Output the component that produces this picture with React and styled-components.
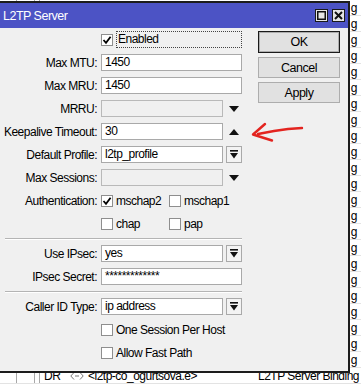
import React from 'react';
import styled, { createGlobalStyle } from 'styled-components';

const GlobalStyle = createGlobalStyle`
  html, body {
    margin: 0;
    padding: 0;
    background: #fff;
    overflow: hidden;
  }
  body {
    font-family: "Liberation Sans", Arial, sans-serif;
    font-size: 12px;
    letter-spacing: -0.5px;
    color: #000;
  }
`

const Desktop = styled.div`
  position: relative;
  width: 361px;
  height: 386px;
  overflow: hidden;
`

const Table = styled.div`
  display: flex;
  flex-direction: column;
`

const Row = styled.div`
  display: grid;
  grid-template-columns: 17px 18px 5px 30px 18px 170px 92px 1fr;
  height: 16px;
  line-height: 16px;
  border-bottom: 1px solid #e3e3e3;
  box-sizing: border-box;
  white-space: nowrap;
`

const Cell = styled.div`
  border-right: ${({ $line }) => ($line ? '1px solid #a8a8a8' : 'none')};
  padding-left: ${({ $pad }) => $pad || 0}px;
  overflow: hidden;
`

/* only the tail of the type column shows past the window edge */
const TypeTail = styled.div`
  display: flex;
  justify-content: flex-end;
  overflow: hidden;
  padding-right: 4px;
`

const Window = styled.div`
  position: absolute;
  left: -4px;
  top: 1px;
  width: 354px;
  height: 372px;
  box-sizing: border-box;
  border: 2px solid #1c1c1c;
  background: #f0f0f0;
  display: flex;
  flex-direction: column;
`

const TitleBar = styled.div`
  height: 25px;
  background: #4c53c5;
  display: flex;
  align-items: center;
  justify-content: space-between;
  padding: 0 3px 0 5px;
`

const Title = styled.span`
  color: #fff;
  font-size: 12.5px;
`

const TitleButtons = styled.div`
  display: flex;
  gap: 4px;
`

const TitleButton = styled.div`
  width: 11px;
  height: 11px;
  border: 1px solid #1a1a1a;
  background: #e6e6e6;
  display: flex;
  align-items: center;
  justify-content: center;
`

const Body = styled.div`
  display: flex;
  gap: 16px;
  padding-top: 3px;
`

const Form = styled.div`
  display: flex;
  flex-direction: column;
  gap: 6px;
  width: 244px;
`

const Field = styled.div`
  display: grid;
  grid-template-columns: 99px 141px;
  column-gap: 4px;
  height: 17px;
  align-items: center;
`

const Label = styled.div`
  text-align: right;
  white-space: nowrap;
`

const Control = styled.div`
  display: flex;
  align-items: center;
  gap: 3px;
  height: 17px;
`

const Input = styled.div`
  box-sizing: border-box;
  height: 17px;
  width: ${({ $short }) => ($short ? '122px' : '141px')};
  border: 1px solid ${({ $disabled }) => ($disabled ? '#b9b9b9' : '#a9a9a9')};
  background: ${({ $disabled }) => ($disabled ? '#f0f0f0' : '#fff')};
  padding-left: 3px;
  line-height: 15px;
  white-space: nowrap;
  overflow: hidden;
`

const Arrow = styled.div`
  width: 15px;
  height: 16px;
  display: flex;
  align-items: center;
  justify-content: center;
`

const DropButton = styled.div`
  box-sizing: border-box;
  width: 16px;
  height: 17px;
  border: 1px solid #a9a9a9;
  background: #f3f3f3;
  display: flex;
  align-items: center;
  justify-content: center;
`

const Checks = styled.div`
  display: grid;
  grid-template-columns: 68px 68px;
  align-items: center;
`

const Check = styled.label`
  display: flex;
  align-items: center;
  gap: 3px;
  white-space: nowrap;
`

const Box = styled.span`
  box-sizing: border-box;
  width: 12px;
  height: 12px;
  border: 1px solid #8e8e8e;
  background: #fff;
  display: flex;
  align-items: center;
  justify-content: center;
`

const Focus = styled.span`
  flex: 1;
  height: 17px;
  line-height: 15px;
  box-sizing: border-box;
  border: 1px dotted #444;
  padding-left: 1px;
`

const Separator = styled.div`
  height: 1px;
  margin-left: 7px;
  background: #b4b4b4;
  border-bottom: 1px solid #fff;
  margin-bottom: -1px;
`

const Buttons = styled.div`
  display: flex;
  flex-direction: column;
  gap: 4px;
  width: 82px;
`

const Button = styled.div`
  box-sizing: border-box;
  height: ${({ $default }) => ($default ? 22 : 21)}px;
  border: 1px solid ${({ $default }) => ($default ? '#1a1a1a' : '#adadad')};
  box-shadow: ${({ $default }) => ($default ? 'inset 0 0 0 1px #adadad' : 'none')};
  background: #e1e1e1;
  display: flex;
  align-items: center;
  justify-content: center;
  font-size: 12.5px;
`

const Annotation = styled.svg`
  position: absolute;
  left: 246px;
  top: 116px;
`

const TickIcon = () => (
  <svg width="10" height="10" viewBox="0 0 10 10">
    <path d="M1.5 5 L4 7.8 L8.6 1.8" fill="none" stroke="#000" strokeWidth="1.8" />
  </svg>
)

const Tri = ({ up }) => (
  <svg width="10" height="6" viewBox="0 0 10 6">
    <path d={up ? 'M0 6 L5 0 L10 6 Z' : 'M0 0 L10 0 L5 6 Z'} fill="#111" />
  </svg>
)

const DropIcon = () => (
  <svg width="8" height="9" viewBox="0 0 8 9">
    <rect x="0" y="0" width="8" height="1.6" fill="#111" />
    <path d="M0 3 L8 3 L4 8.5 Z" fill="#111" />
  </svg>
)

const CheckBox = ({ checked, children }) => (
  <Check>
    <Box>{checked && <TickIcon />}</Box>
    {children}
  </Check>
)

const LinkIcon = () => (
  <svg width="14" height="8" viewBox="0 0 14 8" style={{ marginTop: 4 }}>
    <path d="M4 0.5 L0.8 4 L4 7.5 M10 0.5 L13.2 4 L10 7.5 M5 4 L9 4" fill="none" stroke="#777" strokeWidth="1" />
  </svg>
)

const rows = Array.from({ length: 23 })

export default function App() {
  return (
    <>
      <GlobalStyle />
      <Desktop>
        <Table>
          {rows.map((_, i) => (
            <Row key={i}>
              <Cell $line />
              <Cell $line />
              <Cell $line />
              <Cell />
              <Cell />
              <Cell />
              <Cell />
              <TypeTail>g</TypeTail>
            </Row>
          ))}
          <Row>
            <Cell $line />
            <Cell $line />
            <Cell $line />
            <Cell $pad={4}>DR</Cell>
            <Cell><LinkIcon /></Cell>
            <Cell>&lt;l2tp-co_ogurtsova.e&gt;</Cell>
            <Cell style={{ gridColumn: 'span 2' }}>L2TP Server Binding</Cell>
          </Row>
        </Table>

        <Window>
          <TitleBar>
            <Title>L2TP Server</Title>
            <TitleButtons>
              <TitleButton>
                <svg width="9" height="9" viewBox="0 0 9 9">
                  <rect x="0.75" y="0.75" width="7.5" height="7.5" fill="none" stroke="#111" strokeWidth="1.5" />
                </svg>
              </TitleButton>
              <TitleButton>
                <svg width="9" height="9" viewBox="0 0 9 9">
                  <path d="M1 1 L8 8 M8 1 L1 8" stroke="#111" strokeWidth="2" />
                </svg>
              </TitleButton>
            </TitleButtons>
          </TitleBar>

          <Body>
            <Form>
              <Field>
                <span />
                <Control>
                  <Box><TickIcon /></Box>
                  <Focus>Enabled</Focus>
                </Control>
              </Field>
              <Field>
                <Label>Max MTU:</Label>
                <Control><Input>1450</Input></Control>
              </Field>
              <Field>
                <Label>Max MRU:</Label>
                <Control><Input>1450</Input></Control>
              </Field>
              <Field>
                <Label>MRRU:</Label>
                <Control><Input $short $disabled /><Arrow><Tri /></Arrow></Control>
              </Field>
              <Field>
                <Label>Keepalive Timeout:</Label>
                <Control><Input $short>30</Input><Arrow><Tri up /></Arrow></Control>
              </Field>
              <Field>
                <Label>Default Profile:</Label>
                <Control><Input $short>l2tp_profile</Input><DropButton><DropIcon /></DropButton></Control>
              </Field>
              <Field>
                <Label>Max Sessions:</Label>
                <Control><Input $short $disabled /><Arrow><Tri /></Arrow></Control>
              </Field>
              <Field>
                <Label>Authentication:</Label>
                <Checks>
                  <CheckBox checked>mschap2</CheckBox>
                  <CheckBox>mschap1</CheckBox>
                </Checks>
              </Field>
              <Field>
                <span />
                <Checks>
                  <CheckBox>chap</CheckBox>
                  <CheckBox>pap</CheckBox>
                </Checks>
              </Field>
              <Separator />
              <Field>
                <Label>Use IPsec:</Label>
                <Control><Input $short>yes</Input><DropButton><DropIcon /></DropButton></Control>
              </Field>
              <Field>
                <Label>IPsec Secret:</Label>
                <Control><Input>*************</Input></Control>
              </Field>
              <Separator />
              <Field>
                <Label>Caller ID Type:</Label>
                <Control><Input $short>ip address</Input><DropButton><DropIcon /></DropButton></Control>
              </Field>
              <Field>
                <span />
                <CheckBox>One Session Per Host</CheckBox>
              </Field>
              <Field>
                <span />
                <CheckBox>Allow Fast Path</CheckBox>
              </Field>
            </Form>

            <Buttons>
              <Button $default>OK</Button>
              <Button>Cancel</Button>
              <Button>Apply</Button>
            </Buttons>
          </Body>
        </Window>

        <Annotation width="60" height="30" viewBox="246 116 60 30">
          <path d="M302 128 Q288 128.5 274 131 Q266 132.5 258 134" fill="none" stroke="#e3241f" strokeWidth="2.4" strokeLinecap="round" />
          <path d="M265 124 L253 134.5 L272 140.5" fill="none" stroke="#e3241f" strokeWidth="2.4" strokeLinecap="round" strokeLinejoin="round" />
        </Annotation>
      </Desktop>
    </>
  )
}
